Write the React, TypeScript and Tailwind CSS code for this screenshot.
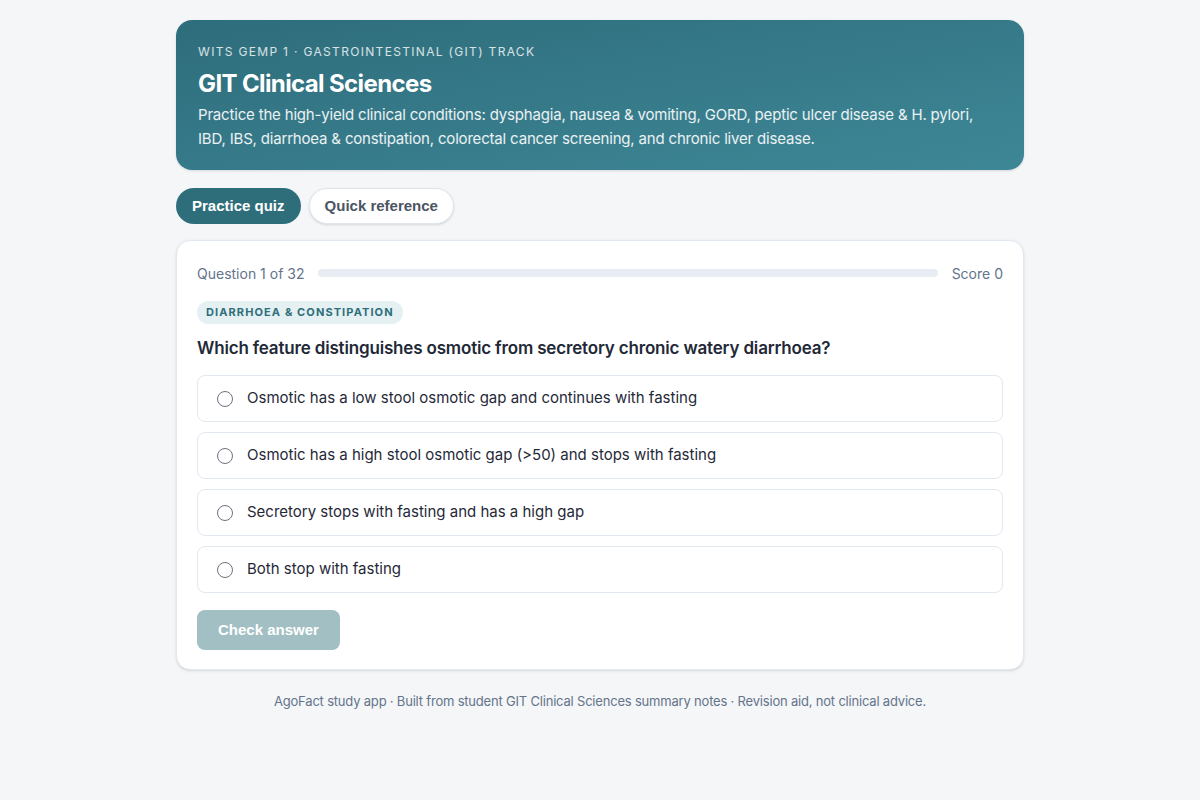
import React, { useState } from "react";

const options = [
  "Osmotic has a low stool osmotic gap and continues with fasting",
  "Osmotic has a high stool osmotic gap (>50) and stops with fasting",
  "Secretory stops with fasting and has a high gap",
  "Both stop with fasting",
];

export default function App() {
  const [selected, setSelected] = useState<number | null>(null);

  return (
    <div className="min-h-screen bg-[#f4f6f8] font-['Inter','Noto_Sans',sans-serif] text-[#1f2937]">
      <div className="mx-auto w-[848px] pt-5">
        {/* Header */}
        <header className="rounded-2xl bg-gradient-to-br from-[#2e6d7b] to-[#3e8797] px-[22px] pt-[24px] pb-[19px] text-white shadow-sm">
          <p className="text-[12px] uppercase tracking-[0.11em] text-white/80 leading-4">
            Wits GEMP 1 · Gastrointestinal (GIT) track
          </p>
          <h1 className="mt-[8px] text-[24px] font-bold leading-8 tracking-[-0.026em]">GIT Clinical Sciences</h1>
          <p className="mt-[3px] text-[15px] leading-6 tracking-[-0.012em] text-white/90">
            Practice the high-yield clinical conditions: dysphagia, nausea &amp; vomiting, GORD, peptic ulcer disease &amp; H. pylori,
            IBD, IBS, diarrhoea &amp; constipation, colorectal cancer screening, and chronic liver disease.
          </p>
        </header>

        {/* Tabs */}
        <div className="mt-[18px] flex gap-2 font-['Liberation_Sans',Arial,sans-serif]">
          <button className="h-9 rounded-full bg-[#2e6e7b] px-4 text-[15px] font-bold text-white">
            Practice quiz
          </button>
          <button className="h-9 rounded-full border border-[#dfe5eb] bg-white px-[15px] text-[15px] font-bold text-[#4b5563] shadow-sm">
            Quick reference
          </button>
        </div>

        {/* Quiz card */}
        <section className="mt-4 rounded-[14px] border border-[#e2e8f0] bg-white px-5 pt-5 pb-[19px] shadow-sm">
          <div className="flex h-6 items-center gap-[14px] text-[14px] text-[#64748b]">
            <span>Question 1 of 32</span>
            <div className="h-2 flex-1 rounded-full bg-[#e8edf3]">
              <div className="h-2 rounded-full bg-[#2e6e7b]" style={{ width: "0%" }} />
            </div>
            <span>Score 0</span>
          </div>

          <span className="mt-4 inline-flex h-[23px] items-center rounded-full bg-[#e4f0f2] px-[9px] text-[11px] font-bold uppercase tracking-[0.1em] text-[#2e6e7b]">
            Diarrhoea &amp; constipation
          </span>

          <h2 className="mt-3 text-[17px] font-semibold leading-6 tracking-[-0.01em] text-[#1f2937]">
            Which feature distinguishes osmotic from secretory chronic watery diarrhoea?
          </h2>

          <div className="mt-[15px] flex flex-col gap-[10px]">
            {options.map((opt, i) => (
              <label
                key={i}
                className="flex h-[47px] cursor-pointer items-center gap-[14px] rounded-lg border border-[#e2e8f0] px-[19px] text-[15px] text-[#1f2937]"
              >
                <span
                  className={
                    selected === i
                      ? "h-4 w-4 rounded-full border-[5px] border-[#2e6e7b]"
                      : "h-4 w-4 rounded-full border border-[#6b7280]"
                  }
                />
                <input type="radio" name="q" className="hidden" onChange={() => setSelected(i)} />
                {opt}
              </label>
            ))}
          </div>

          <button
            disabled={selected === null}
            className="mt-[17px] h-10 rounded-lg bg-[#a2bfc4] px-[21px] font-['Liberation_Sans',Arial,sans-serif] text-[15px] font-bold text-white"
          >
            Check answer
          </button>
        </section>

        <footer className="mt-[21px] text-center text-[13px] leading-5 tracking-[-0.015em] text-[#64748b]">
          AgoFact study app · Built from student GIT Clinical Sciences summary notes · Revision aid, not clinical advice.
        </footer>
      </div>
    </div>
  );
}
